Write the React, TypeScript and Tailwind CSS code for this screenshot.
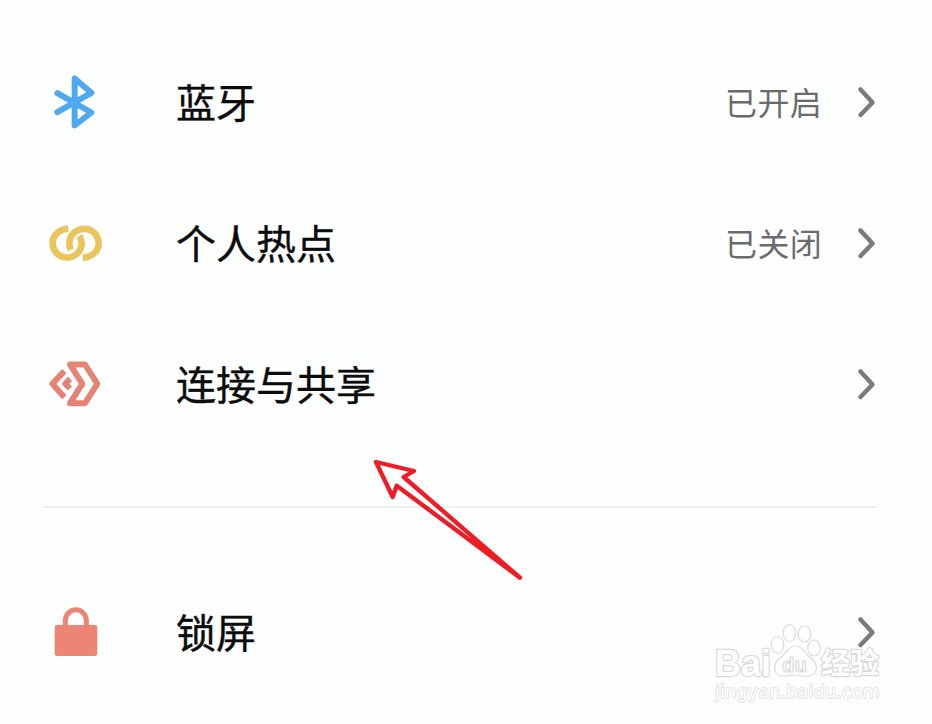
import type { ReactNode } from 'react';

function BluetoothIcon() {
  return (
    <svg viewBox="45 37.5 180 180" className="w-[60px] h-[60px]" fill="none" stroke="#4fa9ee" strokeWidth="18" strokeLinecap="round" strokeLinejoin="round">
      <path d="M82 155 L184 97 L134 54 V195 L184 156 L82 98" />
    </svg>
  );
}

function HotspotIcon() {
  return (
    <svg viewBox="45 10.5 180 180" className="w-[60px] h-[60px]" fill="none" stroke="#ecc45c" strokeWidth="20">
      <path d="M115 54 C87 57 68 74 68 98 A43 43 0 0 0 111 141 A44 43 0 0 0 155 98 Q155 86 148 76" />
      <path d="M158 142 C187 139 206 122 206 98 A43 43 0 0 0 163 55 A45 43 0 0 0 118 98 Q118 109 122 118" />
    </svg>
  );
}

function ShareIcon() {
  return (
    <svg viewBox="45 28.5 180 180" className="w-[60px] h-[60px]" fill="none" stroke="#e58475" strokeWidth="18" strokeLinejoin="round">
      <path d="M120 57 H165 L202 115 L165 173 H120 L157 115 Z" />
      <path d="M103 77 L67 115 L103 155" />
      <path d="M120 100 L106 115 L120 129" />
    </svg>
  );
}

function LockIcon() {
  return (
    <svg viewBox="45 36 180 180" className="w-[60px] h-[60px]">
      <path d="M106 108 V88 A31.5 31.5 0 0 1 169 88 V108" fill="none" stroke="#ec8573" strokeWidth="15" />
      <rect x="74" y="102" width="128" height="93" rx="8" fill="#ec8573" />
    </svg>
  );
}

function ChevronIcon() {
  return (
    <svg viewBox="0 0 24 36" className="w-6 h-9" fill="none" stroke="#7b7b7e" strokeWidth="4.5" strokeLinecap="round" strokeLinejoin="round">
      <path d="M5.5 4.5 L17.5 17.5 L5.5 30" />
    </svg>
  );
}

interface RowProps {
  icon: ReactNode;
  label: string;
  value?: string;
}

function SettingsRow({ icon, label, value }: RowProps) {
  return (
    <button type="button" className="flex h-[141px] w-full items-center pl-[45px] pr-[53px] text-left">
      {icon}
      <span className="ml-[71px] flex-1 pb-1 text-[40px] leading-none text-[#0c0c0d] [-webkit-text-stroke:0.4px_#0c0c0d]">{label}</span>
      {value && <span className="mr-[33px] pb-1 text-[32px] leading-none tracking-[0.3px] text-[#6b6b6e]">{value}</span>}
      <ChevronIcon />
    </button>
  );
}

function Watermark() {
  return (
    <svg
      className="pointer-events-none absolute left-[700px] top-[600px]"
      width="232"
      height="124"
      fill="#fefefe"
      stroke="#dadada"
      strokeWidth="1.2"
      strokeLinejoin="round"
    >
      <g fontWeight="700" style={{ paintOrder: 'stroke' }}>
        <text x="15" y="76" fontSize="36" strokeWidth="2.4" textLength="56" lengthAdjust="spacingAndGlyphs" fontFamily="Liberation Sans, sans-serif">Bai</text>
        <text x="121" y="74" fontSize="29" strokeWidth="2.4" textLength="58" lengthAdjust="spacingAndGlyphs" fontFamily="Noto Sans CJK SC, sans-serif">经验</text>
      </g>
      <ellipse cx="77.5" cy="45" rx="6.3" ry="8.5" />
      <ellipse cx="89.5" cy="33" rx="6.3" ry="8.5" />
      <ellipse cx="104.5" cy="34" rx="6.3" ry="8" />
      <ellipse cx="114" cy="48" rx="6.3" ry="8" />
      <path d="M95 46 C88 46 87 53 80 58 C72 64 73 76 83 76 C88 76 91 75 95 75 C100 75 103 77 108 76 C118 75 119 65 111 58 C104 53 103 46 95 46 Z" />
      <text x="82" y="72" fontSize="21" textLength="25" lengthAdjust="spacingAndGlyphs" fontFamily="Liberation Sans, sans-serif" fontWeight="700">du</text>
      <text x="15" y="98" fontSize="18" strokeWidth="1.6" stroke="#dedede" textLength="165" lengthAdjust="spacingAndGlyphs" fontFamily="DejaVu Sans, sans-serif" style={{ paintOrder: 'stroke' }}>jingyan.baidu.com</text>
    </svg>
  );
}

function Arrow() {
  return (
    <svg className="pointer-events-none absolute left-[360px] top-[440px]" width="180" height="150" viewBox="0 0 540 450" fill="none" stroke="#ee1c25" strokeWidth="13" strokeLinecap="round" strokeLinejoin="round">
      <path d="M480 413 L110 137 L98 171 L48 66 L162 93 L131 111 Z" />
    </svg>
  );
}

export default function App() {
  return (
    <main className="relative h-[724px] w-[932px] overflow-hidden bg-[#fdfefe] pt-8 font-['Noto_Sans_CJK_SC',sans-serif]">
      <SettingsRow icon={<BluetoothIcon />} label="蓝牙" value="已开启" />
      <SettingsRow icon={<HotspotIcon />} label="个人热点" value="已关闭" />
      <SettingsRow icon={<ShareIcon />} label="连接与共享" />
      <div className="mb-[54px] ml-[43px] mr-[54px] mt-[51px] h-0.5 bg-[#eff0f5]" />
      <SettingsRow icon={<LockIcon />} label="锁屏" />
      <Arrow />
      <Watermark />
    </main>
  );
}
